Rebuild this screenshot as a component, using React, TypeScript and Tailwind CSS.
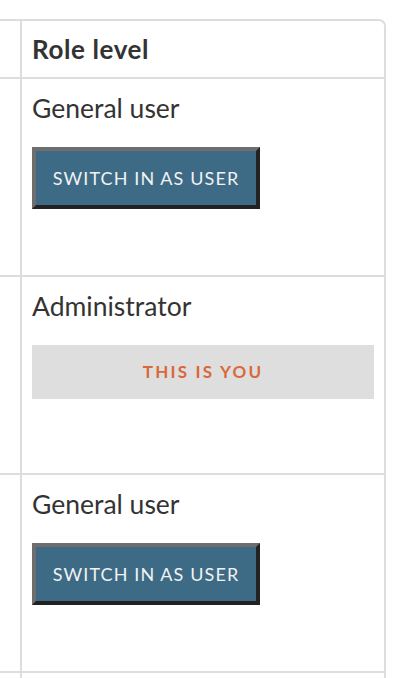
const rows = [
  { role: "General user", self: false },
  { role: "Administrator", self: true },
  { role: "General user", self: false },
];

export default function App() {
  return (
    <div
      className="w-[404px] h-[678px] overflow-hidden bg-white pt-[19px] text-[#333]"
      style={{ fontFamily: 'Lato, "Open Sans", sans-serif' }}
    >
      <div className="w-[386px] border-t-2 border-r-2 border-[#dddddd] rounded-tr-[7px]">
        {/* Header */}
        <div className="flex h-[58px] border-b-2 border-[#dddddd]">
          <div className="w-[22px] shrink-0 border-r-2 border-[#dddddd]" />
          <div className="flex-1 px-[10px] pt-[13px] text-[26px] font-bold leading-[30px] tracking-[0.6px]">
            Role level
          </div>
        </div>

        {rows.map((row, i) => (
          <div key={i} className="flex h-[198px] border-b-2 border-[#dddddd]">
            <div className="w-[22px] shrink-0 border-r-2 border-[#dddddd]" />
            <div className="flex-1 px-[10px] pt-[14px]">
              <p className="text-[26.5px] leading-[30px]">{row.role}</p>
              {row.self ? (
                <div className="mt-[24px] flex h-[54px] items-center justify-center bg-[#dedede] text-[17px] font-bold tracking-[2.2px] text-[#d9683a]">
                  THIS IS YOU
                </div>
              ) : (
                <button className="mt-[24px] h-[62px] w-[228px] border-4 border-t-[#6e6e6e] border-l-[#6e6e6e] border-b-[#222222] border-r-[#222222] bg-[#3d6a85] text-[18px] tracking-[1.1px] text-[#f2f2f2]">
                  SWITCH IN AS USER
                </button>
              )}
            </div>
          </div>
        ))}
        <div className="flex h-[20px]">
          <div className="w-[22px] shrink-0 border-r-2 border-[#dddddd]" />
        </div>
      </div>
    </div>
  );
}
